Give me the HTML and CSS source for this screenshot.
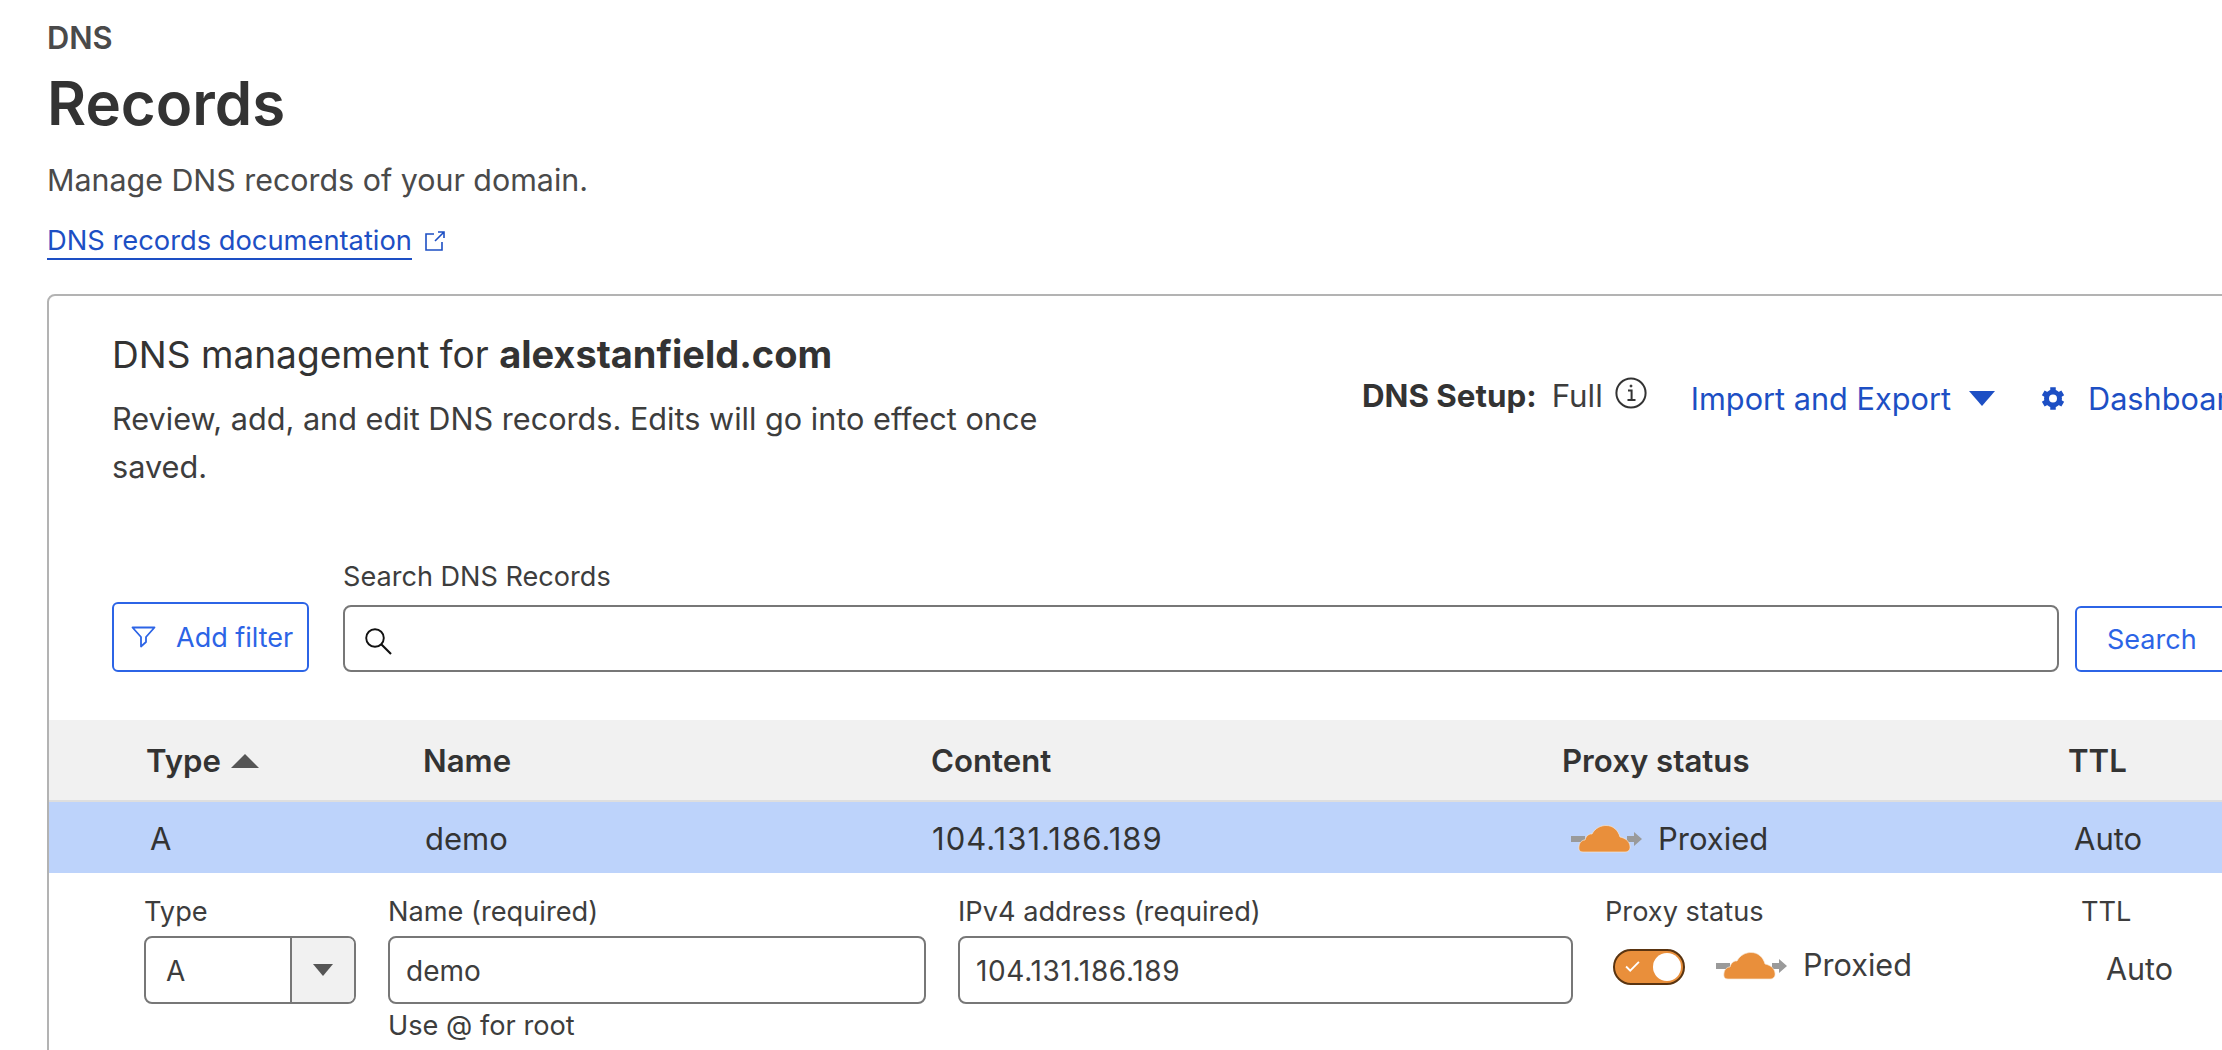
FILE: index.html
```html
<!DOCTYPE html>
<html lang="en">
<head>
<meta charset="utf-8">
<title>DNS Records</title>
<link rel="stylesheet" href="styles.css">
</head>
<body>
<header class="page-head">
  <div class="crumb">DNS</div>
  <h1 class="page-title">Records</h1>
  <p class="page-desc">Manage DNS records of your domain.</p>
  <div class="doc-row">
    <a class="doc-link">DNS records documentation</a>
    <svg class="ext-icon" viewBox="0 0 22 22" fill="none" stroke="#1d4fc4" stroke-width="1.6"><path d="M10 4H2v16h16v-8"/><path d="M11 11 20 2M14 2h6v6"/></svg>
  </div>
</header>
<main class="card">
  <section class="card-top">
    <div class="intro">
      <h2 class="intro-title">DNS management for <b>alexstanfield.com</b></h2>
      <p class="intro-text">Review, add, and edit DNS records. Edits will go into effect once saved.</p>
    </div>
    <div class="actions">
      <span class="setup"><b>DNS Setup:</b><span class="setup-val">Full</span>
        <svg class="info-icon" viewBox="0 0 32 32" fill="none" stroke="#333" stroke-width="2"><circle cx="16" cy="16" r="14.6"/><path d="M13 13.5h3.6V23M12.5 23h8" /><circle cx="16" cy="9" r="1" fill="#333" stroke-width="1"/></svg>
      </span>
      <a class="action-link import">Import and Export<svg class="caret" viewBox="0 0 28 16"><path d="M0 0h28L14 16z" fill="#1d4fc4"/></svg></a>
      <a class="action-link">
        <svg class="gear" viewBox="0 0 24 24" fill="none" stroke="#1d4fc4"><circle cx="12" cy="12" r="6.5" stroke-width="5"/><path stroke-width="5.5" stroke-linejoin="round" d="M12 5V.7M12 19v4.300M18.060 8.500l3.700-2.150M18.060 15.500l3.700 2.150M5.940 8.500l-3.700-2.150M5.940 15.500l-3.700 2.150"/></svg>
        Dashboard Display Settings</a>
    </div>
  </section>
  <section class="search-row">
    <button class="btn filter-btn">
      <svg class="filter-icon" viewBox="0 0 25 22" fill="none" stroke="#2c64e6" stroke-width="1.8" stroke-linejoin="round"><path d="M1.500 1.500h22L15 11v5l-5 4.500V11z"/></svg>
      Add filter</button>
    <div class="search-field">
      <label class="search-label">Search DNS Records</label>
      <div class="input search-input">
        <svg class="search-icon" viewBox="0 0 27 27" fill="none" stroke="#111" stroke-width="1.9"><circle cx="10" cy="10" r="8.800"/><path d="m16.500 16.500 9.500 9.500" stroke-width="2.1"/></svg>
      </div>
    </div>
    <button class="btn search-btn">Search</button>
  </section>
  <section class="table">
    <div class="thead">
      <div class="th">Type<svg class="sort" viewBox="0 0 28 14"><path d="M14 0 28 14H0z" fill="#555"/></svg></div>
      <div class="th th-name">Name</div>
      <div class="th">Content</div>
      <div class="th">Proxy status</div>
      <div class="th">TTL</div>
    </div>
    <div class="trow">
      <div class="td td-type">A</div>
      <div class="td td-name">demo</div>
      <div class="td td-num">104.131.186.189</div>
      <div class="td td-proxy">
        <svg class="cloud" viewBox="0 0 72 28"><path d="M0 11h14v6H0zM56 11h7V7l8 7-8 7v-4h-7z" fill="#9a9a9a"/><path d="M12 27C8 27 7.500 24 8 21C8.500 17.500 11 15 14 15C15 11 18 8.500 21 9C24 3 30 .5 35 .5C42 .5 47 5 49 12C54 13 58.500 16 59 21C59.500 25 57 27 54 27Z" fill="#e98f3b" stroke="#f6e6d6" stroke-width=".7"/></svg>
        Proxied</div>
      <div class="td td-ttl">Auto</div>
    </div>
    <div class="edit">
      <div class="field f-type">
        <label class="f-label">Type</label>
        <div class="input select"><span class="select-val">A</span><span class="select-btn"><svg class="select-caret" viewBox="0 0 20 12"><path d="M0 0h20L10 12z" fill="#555"/></svg></span></div>
      </div>
      <div class="field f-name">
        <label class="f-label">Name (required)</label>
        <div class="input">demo</div>
        <div class="hint">Use @ for root</div>
      </div>
      <div class="field f-ip">
        <label class="f-label">IPv4 address (required)</label>
        <div class="input input-num">104.131.186.189</div>
      </div>
      <div class="field f-proxy">
        <label class="f-label">Proxy status</label>
        <div class="proxy-ctl">
          <span class="toggle"><svg class="check" viewBox="0 0 16 12" fill="none" stroke="#fff" stroke-width="2"><path d="m1 6 4.500 4.500L15 1"/></svg><span class="knob"></span></span>
          <svg class="cloud cloud-edit" viewBox="0 0 72 28"><path d="M0 11h14v6H0zM56 11h7V7l8 7-8 7v-4h-7z" fill="#9a9a9a"/><path d="M12 27C8 27 7.500 24 8 21C8.500 17.500 11 15 14 15C15 11 18 8.500 21 9C24 3 30 .5 35 .5C42 .5 47 5 49 12C54 13 58.500 16 59 21C59.500 25 57 27 54 27Z" fill="#e98f3b" stroke="#f6e6d6" stroke-width=".7"/></svg>
          <span class="proxy-text">Proxied</span>
        </div>
      </div>
      <div class="field f-ttl">
        <label class="f-label">TTL</label>
        <div class="ttl-val">Auto</div>
      </div>
    </div>
  </section>
</main>
</body>
</html>
```
FILE: styles.css
```css
* { box-sizing: border-box; }
html, body { margin: 0; height: 1050px; overflow: hidden; background: #fff; }
body { font-family: Inter, "Liberation Sans", sans-serif; color: #333; padding: 22px 0 0 47px; }

.crumb { font-size: 30.8px; font-weight: 600; line-height: 32px; color: #4a4a4a; }
.page-title { margin: 13px 0 0; font-size: 60px; font-weight: 600; line-height: 72px; color: #333; }
.page-desc { margin: 22px 0 0; font-size: 30.4px; line-height: 38px; color: #4a4a4a; }
.doc-row { margin-top: 22px; display: flex; align-items: center; gap: 12px; height: 40px; }
.doc-link { font-size: 27.3px; color: #1d4fc4; border-bottom: 2px solid #1d4fc4; line-height: 35px; padding-top: 1px; }
.ext-icon { width: 22px; height: 22px; }

.card { margin-top: 33px; width: 2400px; height: 900px; border: 2px solid #b3b3b3; border-radius: 8px; background: #fff; }
.card-top { display: flex; height: 240px; padding: 30px 0 0 63px; }
.intro { width: 1250px; flex: none; }
.intro-title { margin: 0; font-size: 37.1px; font-weight: 400; line-height: 56px; color: #333; }
.intro-title b { font-weight: 700; font-size: 38px; }
.intro-text { margin: 12px 0 0; width: 960px; font-size: 30.65px; line-height: 48px; color: #3d3d3d; }
.actions { display: flex; align-items: flex-start; gap: 44px; padding-top: 52px; white-space: nowrap; }
.setup { display: flex; align-items: center; font-size: 31.3px; gap: 15px; color: #333; margin-top: -1px; }
.setup-val { color: #3d3d3d; }
.info-icon { width: 32px; height: 32px; margin-top: -6px; margin-left: -3px; }
.action-link { display: flex; align-items: center; font-size: 30.7px; color: #1d4fc4; margin-top: 2px; }
.caret { width: 26px; height: 15px; margin-left: 18px; }
.gear { width: 24px; height: 25px; margin-right: 23px; margin-left: 2px; }

.search-row { display: flex; align-items: flex-end; gap: 34px; padding: 0 0 0 63px; height: 136px; }
.btn { background: #fff; border: 2px solid #2c64e6; border-radius: 6px; color: #2c64e6; font: inherit; font-size: 27px; padding: 0; }
.filter-btn { width: 197px; height: 70px; display: flex; align-items: center; padding-left: 17px; gap: 20px; }
.filter-icon { width: 25px; height: 22px; }
.search-field { width: 1716px; }
.search-label { display: block; font-size: 27.1px; line-height: 36px; margin-bottom: 10px; color: #3d3d3d; }
.input { height: 68px; border: 2px solid #777; border-radius: 8px; padding: 2px 16px 0; display: flex; align-items: center; font-size: 28px; color: #3d3d3d; background: #fff; }
.input-num { letter-spacing: .66px; }
.search-input { height: 67px; padding-left: 20px; }
.search-icon { width: 27px; height: 27px; margin-top: 3px; }
.search-btn { width: 180px; height: 66px; margin-left: -18px; text-align: left; padding-left: 30px; }

.table { margin-top: 48px; }
.thead, .trow { display: grid; grid-template-columns: 277px 508px 631px 506px 1fr; padding-left: 97px; }
.thead { height: 82px; align-items: center; background: #f1f1f1; border-bottom: 2px solid #dedede; padding-top: 2px; }
.th { font-size: 31.2px; font-weight: 600; color: #333; display: flex; align-items: center; }
.sort { width: 28px; height: 14px; margin-left: 10px; }
.trow { height: 71px; align-items: center; background: #bdd3fb; font-size: 31px; color: #333; padding-top: 2px; }
.td-num { letter-spacing: 1.04px; padding-left: 1px; }
.td-type { padding-left: 4px; }
.td-name { padding-left: 2px; }
.td-proxy { display: flex; align-items: center; gap: 15px; padding-left: 9px; }
.td-ttl { padding-left: 6px; }
.cloud { width: 72px; height: 28px; flex: none; }

.edit { display: grid; grid-template-columns: 212px 538px 615px 475px 1fr; column-gap: 32px; padding: 21px 0 0 95px; }
.f-label { display: block; font-size: 27.2px; line-height: 36px; margin-bottom: 6px; color: #3d3d3d; }
.select { padding: 0; overflow: hidden; }
.select-val { flex: 1; padding-left: 20px; padding-top: 2px; }
.select-btn { width: 64px; height: 100%; background: #f1f1f1; border-left: 2px solid #777; display: flex; align-items: center; justify-content: center; }
.select-caret { width: 20px; height: 12px; }
.hint { font-size: 27.2px; line-height: 36px; margin-top: 4px; color: #3d3d3d; }
.proxy-ctl { display: flex; align-items: center; padding: 12px 0 0 8px; }
.toggle { width: 72px; height: 36px; border: 2.5px solid #5a3410; border-radius: 18px; background: #e98f3b; display: flex; align-items: center; justify-content: space-between; padding: 0 2px 0 10px; }
.check { width: 15px; height: 11px; }
.knob { width: 28px; height: 28px; border-radius: 50%; background: #fff; }
.cloud-edit { margin-left: 31px; position: relative; top: -1px; }
.proxy-text { margin-left: 15px; font-size: 30.6px; color: #3d3d3d; position: relative; top: -2px; }
.f-ttl { margin-left: -31px; }
.ttl-val { padding: 14px 0 0 25px; font-size: 30.5px; color: #3d3d3d; }
```
